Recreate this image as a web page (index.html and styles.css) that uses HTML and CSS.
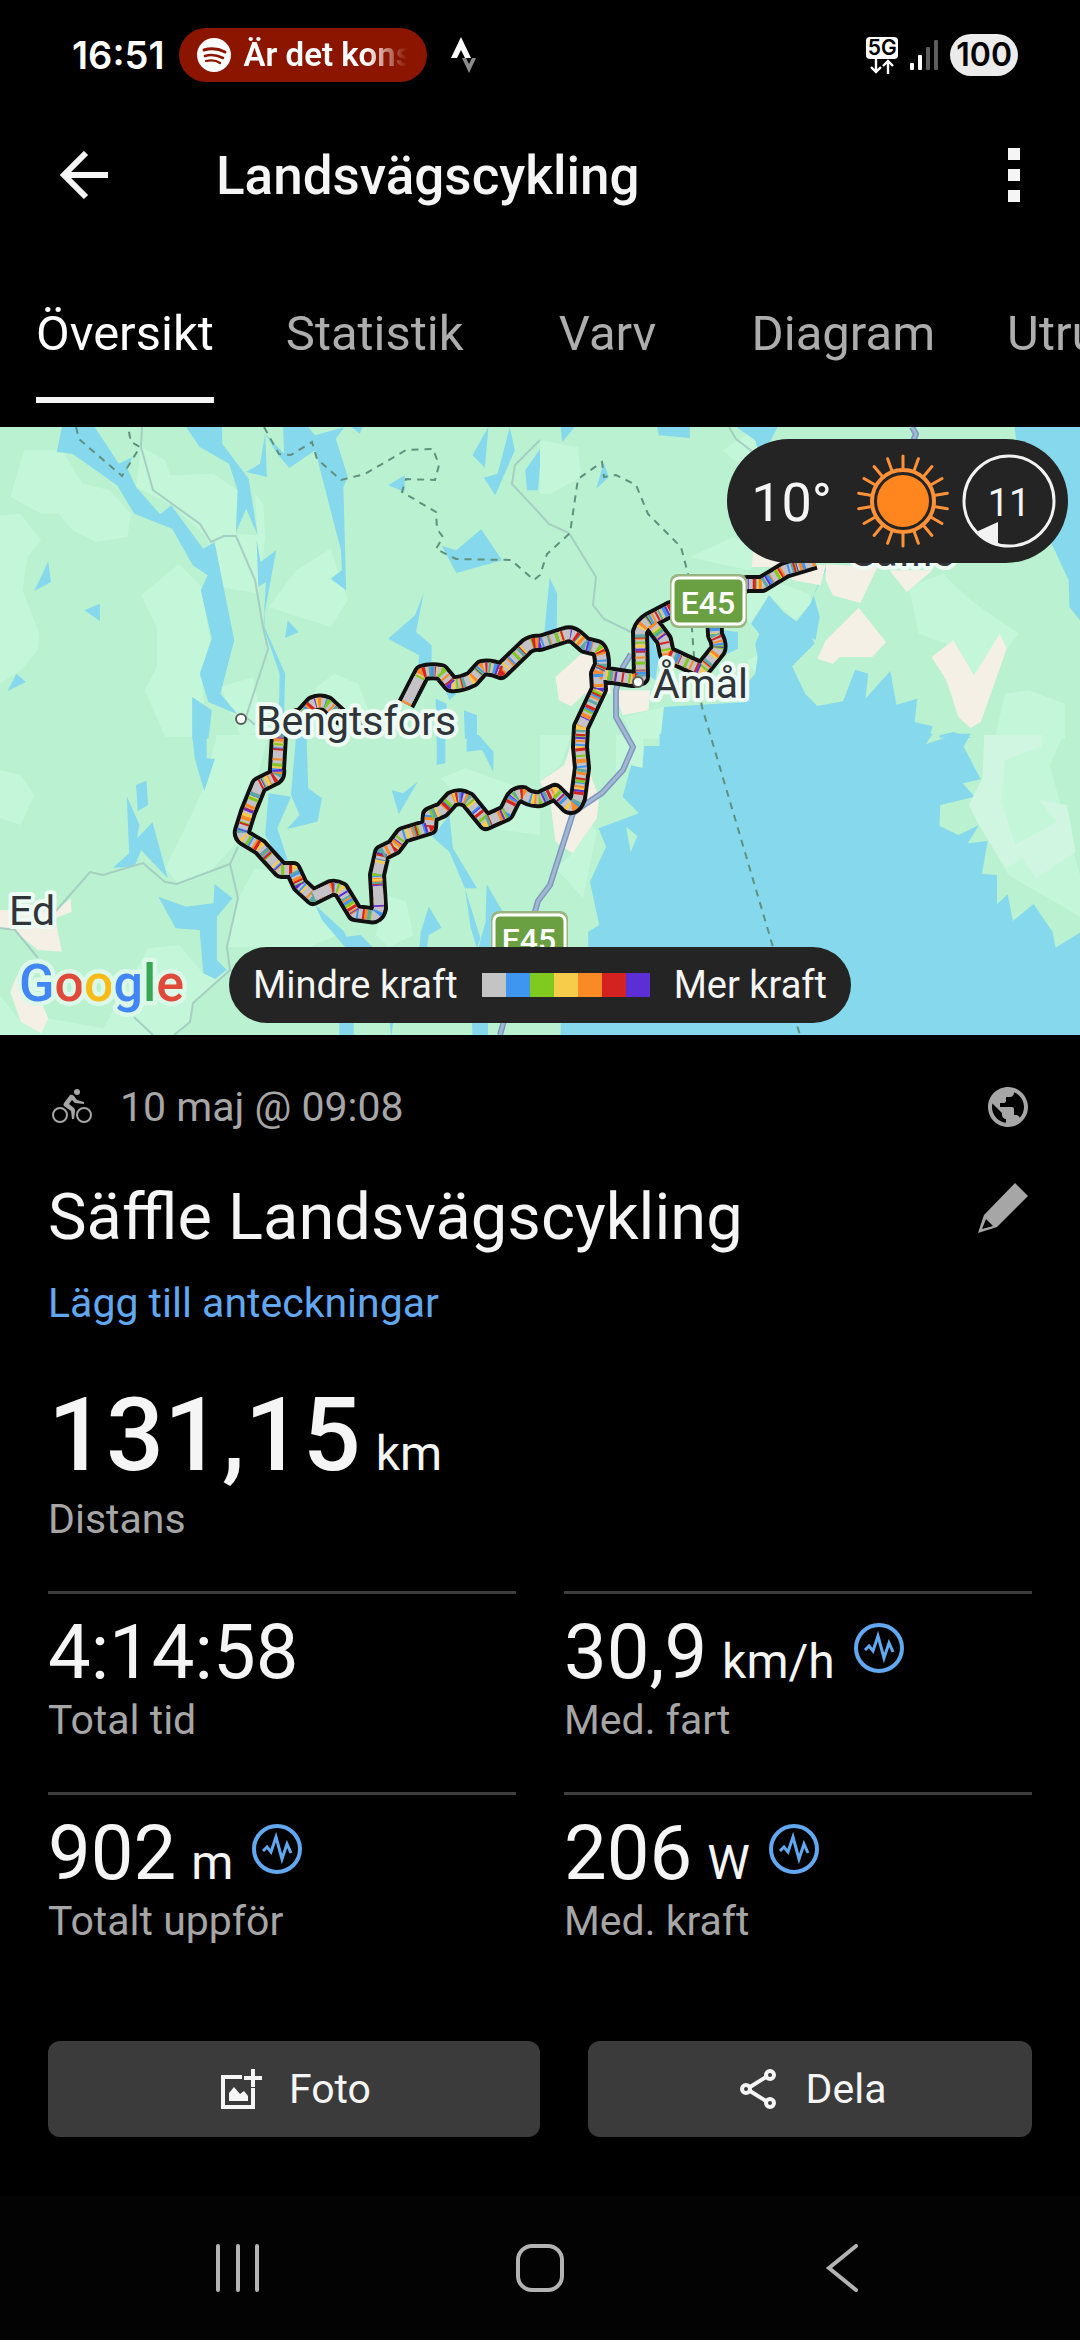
FILE: index.html
```
<!DOCTYPE html>
<html lang="sv">
<head>
    <meta charset="UTF-8">
    <meta name="viewport" content="width=device-width, initial-scale=1.0">
    <title>Landsvägscykling</title>
    <link rel="stylesheet" href="styles.css">
</head>
<body>
    <!-- Shared symbols -->
    <svg class="symbols" aria-hidden="true">
        <symbol id="pulse" viewBox="0 0 50 50">
            <circle cx="25" cy="25" r="23" fill="none" stroke="currentColor" stroke-width="4"/>
            <path d="M11 27l4-4 4 5 5-15 6 22 5-15 4 9" fill="none" stroke="currentColor" stroke-width="3"/>
        </symbol>
    </svg>

    <div class="status">
        <span class="clock">16:51</span>
        <div class="playing">
            <svg width="34" height="34" viewBox="0 0 34 34">
                <circle cx="17" cy="17" r="17" fill="#fff"/>
                <g fill="none" stroke="#8c1500" stroke-linecap="round">
                    <path d="M7 12c7-2 15-1 21 2" stroke-width="3"/>
                    <path d="M8 18c6-2 12-1 18 2" stroke-width="2.6"/>
                    <path d="M9 23c5-1 10-1 14 2" stroke-width="2.2"/>
                </g>
            </svg>
            <span class="song">Är det kons</span>
        </div>
        <svg width="26" height="36" viewBox="0 0 26 36">
            <path d="M10 0L0 21h6l4-8 4 8h6z" fill="#fff"/>
            <path d="M11 21h4l3 6 3-6h4l-7 15z" fill="#8c8c8c"/>
        </svg>
        <div class="status-right">
            <div class="network">
                <span>5G</span>
                <svg width="26" height="15" viewBox="0 0 26 15" fill="none" stroke="#fff" stroke-width="2.4">
                    <path d="M7 0v13M2 8l5 5 5-5M19 15V2M14 7l5-5 5 5"/>
                </svg>
            </div>
            <svg width="28" height="30" viewBox="0 0 28 30">
                <rect y="23" width="4" height="7" rx="1" fill="#fff"/>
                <rect x="8" y="15" width="4" height="15" rx="1" fill="#fff"/>
                <rect x="16" y="7" width="4" height="23" rx="1" fill="#5c5c5c"/>
                <rect x="24" width="4" height="30" rx="1" fill="#5c5c5c"/>
            </svg>
            <span class="battery">100</span>
        </div>
    </div>

    <header class="appbar">
        <button class="icon-button" aria-label="Tillbaka">
            <svg width="48" height="48" viewBox="0 0 48 48" fill="none" stroke="currentColor" stroke-width="6">
                <path d="M48 24H4M26 2L4 24l22 22"/>
            </svg>
        </button>
        <h1>Landsvägscykling</h1>
        <button class="icon-button" aria-label="Meny">
            <svg width="12" height="54" viewBox="0 0 12 54" fill="currentColor">
                <path d="M0 0h12v12H0zM0 21h12v12H0zM0 42h12v12H0z"/>
            </svg>
        </button>
    </header>

    <nav class="tabs">
        <button class="tab active">Översikt</button>
        <button class="tab">Statistik</button>
        <button class="tab">Varv</button>
        <button class="tab">Diagram</button>
        <button class="tab">Utrustning</button>
    </nav>

    <div class="map">
        <svg class="map-canvas" viewBox="0 0 1080 608" preserveAspectRatio="xMidYMid slice">
            <defs>
                <path id="route" d="M406 277L422 246Q430 243 441 245L451 257Q460 258 472 252L482 241Q490 239 501 244L527 219Q533 215 540 216L565 208Q571 206 576 210L585 218 597 221Q602 224 602 238L598 247 599 262 581 300 580 320 582 341 578 371Q573 384 566 376L555 365 540 372Q530 373 523 367 515 367 512 374L506 386 486 395 468 373Q460 368 452 372L442 383 430 388 429 400 403 408 394 420 382 426 377 448 379 481Q377 490 370 488L355 486 341 463Q336 460 331 461L313 470 300 458 293 443 281 443 260 420 245 411Q241 408 242 404L248 385 259 358 275 350Q278 348 277 342L279 308 290 293 303 288 313 277Q320 274 327 277L341 290 370 298 395 296M600 247L633 252 641 250 640 205Q642 198 650 193L671 182 710 170 747 157 762 157 785 143 815 134M652 197L664 213 667 227 702 243 718 223Q720 217 715 208L714 180"/>
            </defs>
            <rect width="1080" height="608" fill="#b9f1d1"/>

            <!-- North west -->
            <g transform="scale(.3444 .3333)">
                <g fill="#c4f6da">
                    <path d="M70 70H180L240 170 320 190 380 260 370 330 280 345 210 310 170 260 120 260 30 210z"/>
                    <path d="M0 265L60 260 120 340 80 390 65 490 115 620 110 670 60 730 0 770z"/>
                    <path d="M410 60L480 100 495 145 620 140 690 190 685 320 748 325 740 200 765 230 770 330 750 500 640 480 600 330 500 235 395 180z"/>
                    <path d="M410 505L520 410 585 480 610 640 585 740 600 930H480L420 790 455 720V600z"/>
                    <path d="M960 365L1010 520 960 600 780 540 860 430z"/>
                    <path d="M640 780L735 750 755 860 840 930H1100L1040 770 970 740 920 780 870 880 700 930z"/>
                </g>
                <g fill="#86d8ec">
                    <path d="M180 0L165 75 210 80 340 175 390 260 500 305 560 415 603 445 583 490 615 635 580 740 605 825 690 862 640 800 680 640 623 345 590 365 497 235 465 262 395 180 370 125 385 90 345 110 275 0z"/>
                    <path d="M540 0L580 60 665 110 690 190 685 315 715 245 748 325 722 155 645 50V0z"/>
                    <path d="M770 20L775 150 715 135 755 110z"/>
                    <path d="M770 20L825 80 822 0H895L915 25 1000 0 975 35 1010 150 997 180 1005 490 960 455 993 430 990 370 915 70 840 123 805 80z"/>
                    <path d="M745 340L757 405 802 370 768 560V600L828 740 825 860H810L812 740 765 600 772 465 750 480z"/>
                    <path d="M140 403L148 465 100 492zM245 550L290 530V582zM48 740L75 765 22 792zM835 580L867 615 828 633zM1127 175L1175 145V195z"/>
                    <path d="M1283 357L1325 370 1397 307 1458 400 1325 438z"/>
                    <path d="M1230 498L1208 615 1253 655V720L1215 715 1217 685 1127 635 1205 565z"/>
                    <path d="M1418 0L1372 85 1408 122zM1480 0L1495 70 1438 205 1405 152 1445 140zM1572 60L1525 130 1530 190H1562z"/>
                    <path d="M558 810L615 850 605 935H558zM1265 815L1297 830 1293 935H1268zM1347 850L1385 865V935H1350zM1290 780L1325 800 1305 820z"/>
                    <path d="M1020 0H1052L1045 20z"/>
                </g>
            </g>

            <!-- North east -->
            <g transform="translate(540) scale(.3444 .3333)">
                <g fill="#c4f6da">
                    <path d="M0 40L110 60 120 150 30 200 0 200z"/>
                    <path d="M435 390L560 330 640 360 610 430 520 410z"/>
                    <path d="M1070 480L1170 440 1250 520 1390 620 1330 700 1260 740 1180 650 1100 620z"/>
                    <path d="M1350 800L1420 790 1525 830V935H1320z"/>
                    <path d="M560 480L700 470 780 500 790 530 740 580 665 505 610 590z"/>
                    <path d="M530 70L620 10 650 120 600 130z"/>
                    <path d="M240 870L360 840 350 935H270zM600 700L730 640 720 720 640 760z"/>
                </g>
                <g fill="#86d8ec">
                    <path d="M60 0H100L65 45zM340 0H435V33L345 25zM570 0H690L660 60 640 100 625 40zM185 108L200 150 163 185zM28 452L50 500 48 640 12 625z"/>
                    <path d="M1378 0H1572V585L1537 540 1535 460 1490 360 1400 200z"/>
                    <path d="M360 840L350 935H1130L1140 898 1088 885 1095 815 1035 833 1017 732 945 815 953 740 915 728 880 823 805 837 770 800 732 718 797 650 780 605 740 580 707 555 665 505 613 590 637 620 625 650 632 690 625 740 600 770V825z"/>
                    <path d="M740 590L785 530 830 412H838L795 505 812 570 800 640zM530 610L575 615V665L545 680zM318 610L345 690 335 760 310 740zM1160 925L1200 915 1255 932H1160z"/>
                </g>
                <g fill="#f5f0e5">
                    <path d="M620 365L700 405 830 415 815 475 735 460 700 420 615 420z"/>
                    <path d="M830 412L980 420 930 528 850 505 830 460zM1015 430H1140L1065 495z"/>
                    <path d="M925 542L1005 645 965 690H870L850 710 805 695 830 640z"/>
                    <path d="M1200 640L1260 745 1335 620 1355 665 1280 885 1250 903 1215 870 1180 760 1137 690z"/>
                    <path d="M120 680L45 750 55 820 90 838 130 800 205 800 200 700zM215 790H320L315 850 240 865z"/>
                </g>
            </g>

            <!-- South west -->
            <g transform="translate(0 308) scale(.3444 .3333)">
                <g fill="#c4f6da">
                    <path d="M0 105L60 120 100 180 60 270 0 250z"/>
                    <path d="M630 0H780L740 150 690 320 600 420 520 450 480 400 560 230 590 160z"/>
                    <path d="M1280 130L1350 100 1568 180V300L1420 280z"/>
                    <path d="M430 640L520 630 590 715 668 705 560 805 553 860 505 900H0V780L60 860 140 850 300 880z"/>
                    <path d="M692 490L740 400 850 420 910 500 980 600 900 636H660zM1120 480L1180 500 1200 600 1130 636 1090 600z"/>
                </g>
                <g fill="#86d8ec">
                    <path d="M558 0H600V70L624 72 593 168 566 72zM425 137L430 210 400 228 395 150z"/>
                    <path d="M368 183L405 270 398 310 443 262 487 430 410 345 390 395 328 398 375 355z"/>
                    <path d="M860 0H890L895 160 935 190 922 260 833 282 870 240 845 180z"/>
                    <path d="M780 175L845 185 805 280 835 375 815 380 770 300zM1268 0H1293V85L1268 90zM1355 0H1390L1433 50 1432 110 1400 45 1355 50z"/>
                    <path d="M1137 165L1170 175 1213 140 1158 237zM1305 240L1315 340 1385 460 1350 460 1305 350 1255 305z"/>
                    <path d="M460 485L540 515 620 505 623 447 675 490 630 545V675L658 705 625 732 590 715 580 585 510 580z"/>
                    <path d="M915 510L1000 590 1005 605 1047 600 1085 640H1005L935 555zM1245 515L1282 578 1245 600 1240 636H1218L1222 590z"/>
                    <path d="M1350 460L1395 610 1385 640 1367 580zM1413 448L1460 530 1425 560V636H1390L1410 560z"/>
                    <path d="M985 850H1027V905H985zM1130 850H1143L1136 905zM1370 850H1417V905H1372z"/>
                </g>
                <path d="M0 525L160 530 205 490 208 530 160 550 180 650 110 645 45 590 0 580zM50 720L120 800 140 850 120 895 60 860 30 770z" fill="#f5f0e5"/>
            </g>

            <!-- South east -->
            <g transform="translate(540 308) scale(.3444 .3333)">
                <path d="M347 -4V33H303L297 98 265 90 240 185 287 235 170 280 192 335 145 440 172 570 140 590V640L60 860V905H1572V590L1497 638 1488 590 1433 507 1373 558 1358 478 1327 508V420L1283 417 1300 318 1242 325 1275 270 1215 300 1160 273 1162 210 1262 185 1227 145 1280 133 1230 35 1250 -4H1210L1120 28 1140 -4z" fill="#86d8ec"/>
                <path d="M250 275L283 303 263 352z" fill="#b9f1d1"/>
                <path d="M1290 0H1520L1480 90 1568 420V545L1360 420 1280 280 1245 210 1285 130z" fill="#c4f6da"/>
                <path d="M1290 0H1460L1455 35 1350 75 1340 200 1380 330 1500 260 1450 195 1530 210 1555 350 1440 430 1400 370 1355 400 1280 280 1245 210 1285 130z" fill="#d0f6e1"/>
                <path d="M220 0H300L297 98 265 90 220 110zM150 270L165 290 125 490 45 400 100 350zM0 0H90L60 90 0 140z" fill="#c4f6da"/>
                <path d="M0 140L70 90 90 30 140 100 172 190 165 250 95 355 45 320 30 200z" fill="#f5f0e5"/>
            </g>

            <!-- Minor roads -->
            <g fill="none" stroke="#a5cfc3" stroke-width="2">
                <path d="M142 0L141 20 153 63 200 97 211 115 224 109H236L255 153 263 200 268 222 246 290 255 298M540 13L515 38 512 57 540 87 549 97 569 106 596 150 593 178 604 192 631 205M729 0L736 12 753 25"/>
                <path d="M238 420L230 437 238 471 227 520 230 543 193 576 190 595 174 608M230 437L177 457 165 455 143 436 103 448 90 445 55 485M0 501L15 503 38 531M134 590L153 608"/>
            </g>
            <!-- Borders -->
            <g fill="none" stroke="#61907f" stroke-width="2" stroke-dasharray="7 6">
                <path d="M76 0L79 12 122 49 140 20 131 15 128 0M264 0L279 27 291 28 312 15 317 32 341 53 365 47 406 23 433 22 439 38 435 53 406 52 402 65 436 85 437 102 443 110 436 122 456 132 511 133 534 153 540 148 547 127 570 106 578 52 602 35 604 50 616 48 636 58 648 87 681 120 688 147 694 230 702 280 773 520 800 608"/>
            </g>
            <!-- Main road -->
            <g fill="none" stroke-linejoin="round">
                <path d="M912 0L916 7 913 14M631 227L623 240 616 263 616 290 633 320 623 343 602 366 581 380 573 386 550 458 538 474 500 608" stroke="#7e97bd" stroke-width="6"/>
                <path d="M912 0L916 7 913 14M631 227L623 240 616 263 616 290 633 320 623 343 602 366 581 380 573 386 550 458 538 474 500 608" stroke="#a3b7d5" stroke-width="3"/>
            </g>

            <!-- Ridden route, coloured by power -->
            <g fill="none" stroke-linejoin="round">
                <use href="#route" stroke="#111" stroke-width="18"/>
                <g stroke-width="10">
                    <use href="#route" stroke="#c4c2c6"/>
                    <use href="#route" stroke="#f98a25" stroke-dasharray="3 11 2 17 4 9"/>
                    <use href="#route" stroke="#3e96f0" stroke-dasharray="2 13 3 19" stroke-dashoffset="8"/>
                    <use href="#route" stroke="#f8cc4b" stroke-dasharray="3 16 2 21" stroke-dashoffset="13"/>
                    <use href="#route" stroke="#80c91f" stroke-dasharray="2 23 3 18" stroke-dashoffset="17"/>
                    <use href="#route" stroke="#d3221f" stroke-dasharray="2 12 3 27" stroke-dashoffset="22"/>
                    <use href="#route" stroke="#5c2fd6" stroke-dasharray="1 19 2 31" stroke-dashoffset="5"/>
                    <use href="#route" stroke="#5aa9a3" stroke-dasharray="2 37 3 29" stroke-dashoffset="29"/>
                    <!-- coasting -->
                    <path d="M407 275L419 251M314 469L329 462M378 461L379 478" stroke="#c4c2c6"/>
                </g>
            </g>

            <g class="places">
                <circle cx="241" cy="292" r="5"/>
                <circle cx="638" cy="255" r="5"/>
                <text x="256" y="308">Bengtsfors</text>
                <text x="653" y="271">Åmål</text>
                <text x="9" y="498">Ed</text>
                <text x="851" y="139">Säffle</text>
            </g>

            <g class="shields">
                <rect class="rim" x="670" y="147" width="77" height="54" rx="8"/>
                <rect class="plate" x="673" y="151" width="71" height="46" rx="6"/>
                <text x="708" y="187">E45</text>
                <rect class="rim" x="491" y="484" width="77" height="54" rx="8"/>
                <rect class="plate" x="494" y="488" width="71" height="46" rx="6"/>
                <text x="529" y="524">E45</text>
            </g>

            <text class="google" x="19" y="574"><tspan fill="#4285f4">G</tspan><tspan fill="#e04a3b">o</tspan><tspan fill="#f8bb17">o</tspan><tspan fill="#4285f4">g</tspan><tspan fill="#3aa757">l</tspan><tspan fill="#e04a3b">e</tspan></text>
        </svg>

        <div class="weather">
            <span class="temp">10°</span>
            <svg width="94" height="94" viewBox="-47 -47 94 94">
                <circle r="26" fill="#ff861f"/>
                <g fill="none" stroke="#ff9138">
                    <circle r="31" stroke-width="4"/>
                    <g stroke-width="3" stroke-linecap="round">
                        <path id="rays" d="M0 -33V-45M0 33V45"/>
                        <use href="#rays" transform="rotate(20)"/>
                        <use href="#rays" transform="rotate(40)"/>
                        <use href="#rays" transform="rotate(60)"/>
                        <use href="#rays" transform="rotate(80)"/>
                        <use href="#rays" transform="rotate(100)"/>
                        <use href="#rays" transform="rotate(120)"/>
                        <use href="#rays" transform="rotate(140)"/>
                        <use href="#rays" transform="rotate(160)"/>
                    </g>
                </g>
            </svg>
            <div class="wind">
                <svg width="94" height="94" viewBox="-47 -47 94 94">
                    <circle r="45" fill="none" stroke="#f2f2f2" stroke-width="3"/>
                    <path d="M-11 21V44Q-24 41-33 31z" fill="#f2f2f2"/>
                </svg>
                <span>11</span>
            </div>
        </div>

        <div class="legend">
            <span>Mindre kraft</span>
            <div class="scale"><i></i><i></i><i></i><i></i><i></i><i></i><i></i></div>
            <span>Mer kraft</span>
        </div>
    </div>

    <main>
        <div class="date-row">
            <svg width="48" height="48" viewBox="0 0 48 48" fill="currentColor">
                <g fill="none" stroke="currentColor" stroke-width="2">
                    <circle cx="12" cy="32" r="7"/>
                    <circle cx="36" cy="32" r="7"/>
                </g>
                <circle cx="29" cy="9" r="3"/>
                <path d="M22 12q2-1 4 1l3 4 7 2v2l-9-1-3-3-3 4 5 4q1 1 1 3l-1 8h-2l-1-8-7-5q-1-1 0-3z"/>
            </svg>
            <span>10 maj @ 09:08</span>
            <button class="icon-button" aria-label="Synlig för alla">
                <svg width="48" height="48" viewBox="0 0 24 24" fill="currentColor">
                    <path d="M12 2C6.48 2 2 6.48 2 12s4.480 10 10 10 10-4.480 10-10S17.520 2 12 2zm-1 17.930c-3.950-.49-7-3.850-7-7.930 0-.62.080-1.210.210-1.790L9 15v1c0 1.100.9 2 2 2v1.930zm6.900-2.540c-.26-.81-1-1.390-1.900-1.390h-1v-3c0-.55-.45-1-1-1H8v-2h2c.55 0 1-.45 1-1V7h2c1.100 0 2-.9 2-2v-.41c2.930 1.190 5 4.060 5 7.410 0 2.080-.8 3.970-2.100 5.390z"/>
                </svg>
            </button>
        </div>

        <div class="title-row">
            <h2>Säffle Landsvägscykling</h2>
            <button class="icon-button" aria-label="Redigera">
                <svg width="56" height="56" viewBox="0 0 56 56" fill="currentColor">
                    <path d="M39 4L52 17 21 48 2 54 8 36z"/>
                    <path d="M10 40l7 7-11 3z" fill="#000"/>
                </svg>
            </button>
        </div>

        <a class="notes" href="#">Lägg till anteckningar</a>

        <div class="distance">
            <div class="value">131,15 <small>km</small></div>
            <div class="label">Distans</div>
        </div>

        <div class="stats">
            <div class="stat">
                <div class="value">4:14:58</div>
                <div class="label">Total tid</div>
            </div>
            <div class="stat">
                <div class="value">30,9 <small>km/h</small>
                    <svg class="pulse"><use href="#pulse"/></svg>
                </div>
                <div class="label">Med. fart</div>
            </div>
            <div class="stat">
                <div class="value">902 <small>m</small>
                    <svg class="pulse"><use href="#pulse"/></svg>
                </div>
                <div class="label">Totalt uppför</div>
            </div>
            <div class="stat">
                <div class="value">206 <small>W</small>
                    <svg class="pulse"><use href="#pulse"/></svg>
                </div>
                <div class="label">Med. kraft</div>
            </div>
        </div>

        <div class="actions">
            <button>
                <svg width="48" height="48" viewBox="0 0 48 48" fill="currentColor">
                    <path d="M4 10h21v4H8v26h26V23h4v21H4z"/>
                    <path d="M34 4h4v7h7v4h-7v7h-4v-7h-7v-4h7z"/>
                    <path d="M12 36v-8l5-6 6 7 4-3 4 5v5z"/>
                </svg>
                Foto
            </button>
            <button>
                <svg width="48" height="48" viewBox="0 0 48 48" fill="none" stroke="currentColor" stroke-width="4">
                    <circle cx="36" cy="10" r="4"/>
                    <circle cx="12" cy="24" r="4"/>
                    <circle cx="36" cy="38" r="4"/>
                    <path d="M16 22l16-10M16 26l16 10"/>
                </svg>
                Dela
            </button>
        </div>
    </main>

    <nav class="system-nav">
        <button aria-label="Senaste">
            <svg width="48" height="48" viewBox="0 0 48 48"><path d="M4 2v44M24 2v44M43 2v44"/></svg>
        </button>
        <button aria-label="Hem">
            <svg width="48" height="48" viewBox="0 0 48 48"><rect x="2" y="2" width="44" height="44" rx="14"/></svg>
        </button>
        <button aria-label="Bakåt">
            <svg width="48" height="48" viewBox="0 0 48 48"><path d="M38 2L11 24l27 22"/></svg>
        </button>
    </nav>
</body>
</html>
```
FILE: styles.css
```
* {
    box-sizing: border-box;
}
body {
    margin: 0;
    min-height: 100vh;
    display: flex;
    flex-direction: column;
    background-color: #000;
    color: #f5f5f5;
    font-family: Roboto, sans-serif;
    font-size: 41px;
    line-height: 48px;
    overflow-x: hidden;
}
button {
    font: inherit;
    color: inherit;
    background: none;
    border: none;
    padding: 0;
    cursor: pointer;
}
svg {
    display: block;
    flex-shrink: 0;
}
.symbols {
    position: absolute;
    width: 0;
    height: 0;
}
.icon-button {
    display: flex;
}

/* Status bar */
.status {
    display: flex;
    align-items: center;
    height: 108px;
    padding: 2px 62px 0 72px;
    font-family: Inter, sans-serif;
    font-weight: 600;
    color: #fff;
}
.clock {
    font-size: 38px;
}
.playing {
    display: flex;
    align-items: center;
    gap: 12px;
    width: 248px;
    height: 54px;
    margin: 0 24px 0 15px;
    padding: 0 20px 0 18px;
    border-radius: 27px;
    background-color: #8c1500;
    font-family: Roboto, sans-serif;
    font-size: 33px;
}
.song {
    flex: 1;
    overflow: hidden;
    white-space: nowrap;
    mask-image: linear-gradient(to right, #000 75%, transparent);
}
.status-right {
    display: flex;
    align-items: center;
    gap: 12px;
    margin-left: auto;
}
.network {
    display: flex;
    flex-direction: column;
    align-items: center;
}
.network span {
    width: 32px;
    border-radius: 4px;
    background-color: #fff;
    color: #000;
    font-size: 21px;
    line-height: 22px;
    text-align: center;
}
.battery {
    padding: 0 6px;
    border-radius: 21px;
    background-color: #ebebeb;
    color: #000;
    font-size: 32px;
    line-height: 42px;
}

/* App bar and tabs */
.appbar {
    display: flex;
    align-items: center;
    height: 134px;
    padding: 0 60px;
}
.appbar h1 {
    flex: 1;
    margin: 0 0 0 108px;
    padding-top: 2px;
    font-size: 53px;
    font-weight: 500;
    line-height: 64px;
}
.tabs {
    display: flex;
    padding-bottom: 24px;
    overflow: hidden;
}
.tab {
    flex-shrink: 0;
    min-width: 216px;
    padding: 64px 36px 0;
    color: #adadad;
    font-size: 49px;
    line-height: 56px;
}
.tab::after {
    content: "";
    display: block;
    height: 6px;
    margin-top: 35px;
}
.tab.active {
    color: #fff;
}
.tab.active::after {
    background-color: #f5f5f5;
}

/* Map */
.map {
    position: relative;
    height: 608px;
    overflow: hidden;
}
.map-canvas {
    width: 100%;
    height: 100%;
}
.places text {
    font-size: 41px;
    fill: #30353a;
    stroke: #eefaf4;
    stroke-width: 8px;
    stroke-linejoin: round;
    paint-order: stroke;
}
.places circle {
    fill: #fff;
    stroke: #5c5c5c;
    stroke-width: 2px;
}
.shields .rim {
    fill: #9bb581;
}
.shields .plate {
    fill: #6aa042;
    stroke: #fff;
    stroke-width: 3px;
}
.shields text {
    fill: #fff;
    font-size: 32px;
    font-weight: 500;
    text-anchor: middle;
}
.google {
    font-size: 52px;
    font-weight: 500;
    stroke: #dcf8e8;
    stroke-width: 9px;
    stroke-linejoin: round;
    paint-order: stroke;
}
.weather {
    position: absolute;
    top: 12px;
    right: 12px;
    display: flex;
    align-items: center;
    gap: 12px;
    height: 124px;
    padding: 0 12px 0 24px;
    border-radius: 62px;
    background-color: #242424;
}
.temp {
    margin-right: 12px;
    padding-top: 4px;
    font-size: 54px;
}
.wind {
    display: grid;
    place-items: center;
}
.wind svg,
.wind span {
    grid-area: 1 / 1;
}
.wind span {
    padding-top: 4px;
    font-size: 38px;
}
.legend {
    position: absolute;
    bottom: 12px;
    left: 50%;
    transform: translateX(-50%);
    display: flex;
    align-items: center;
    gap: 24px;
    height: 76px;
    padding: 0 24px;
    border-radius: 38px;
    background-color: #242424;
    font-size: 38px;
    white-space: nowrap;
}
.scale {
    display: flex;
}
.scale i {
    width: 24px;
    height: 24px;
    background-color: #c4c4c4;
}
.scale i:nth-child(2) { background-color: #3e96f0; }
.scale i:nth-child(3) { background-color: #80c91f; }
.scale i:nth-child(4) { background-color: #f8cc4b; }
.scale i:nth-child(5) { background-color: #f98a25; }
.scale i:nth-child(6) { background-color: #d3221f; }
.scale i:nth-child(7) { background-color: #5c2fd6; }

/* Activity */
main {
    padding: 48px;
}
.date-row {
    display: flex;
    align-items: center;
    gap: 24px;
    color: #a6a6a6;
}
.date-row .icon-button {
    margin-left: auto;
}
.title-row {
    display: flex;
    justify-content: space-between;
    margin: 48px 0 24px;
}
.title-row h2 {
    margin: 0;
    font-size: 65px;
    font-weight: 400;
    line-height: 76px;
}
.title-row .icon-button {
    color: #a6a6a6;
}
.notes {
    display: block;
    color: #62a8f0;
    text-decoration: none;
}
.value {
    display: flex;
    align-items: baseline;
    gap: 15px;
    font-size: 76px;
    line-height: 88px;
}
.value small {
    font-size: 48px;
    font-weight: 400;
    line-height: 48px;
}
.distance {
    margin: 48px 0;
}
.distance .value {
    font-size: 102px;
    font-weight: 500;
    line-height: 120px;
}
.label {
    color: #a6a6a6;
}
.pulse {
    align-self: flex-start;
    width: 50px;
    height: 50px;
    margin: 15px 0 0 4px;
    color: #62a8f0;
}
.stats {
    display: grid;
    grid-template-columns: 1fr 1fr;
    gap: 48px;
}
.stat {
    padding-top: 14px;
    border-top: 3px solid #3d3d3d;
}
.actions {
    display: flex;
    gap: 48px;
    margin-top: 96px;
}
.actions button {
    flex: 37;
    display: flex;
    align-items: center;
    justify-content: center;
    gap: 24px;
    height: 96px;
    border-radius: 12px;
    background-color: #3b3b3b;
}
.actions button:first-child {
    flex: 41;
}

/* System navigation */
.system-nav {
    display: flex;
    height: 144px;
    margin-top: auto;
    padding: 0 8%;
    background-color: #030303;
}
.system-nav button {
    flex: 1;
    display: flex;
    align-items: center;
    justify-content: center;
}
.system-nav svg {
    fill: none;
    stroke: #b3b3b3;
    stroke-width: 4px;
    stroke-linecap: round;
}
```
